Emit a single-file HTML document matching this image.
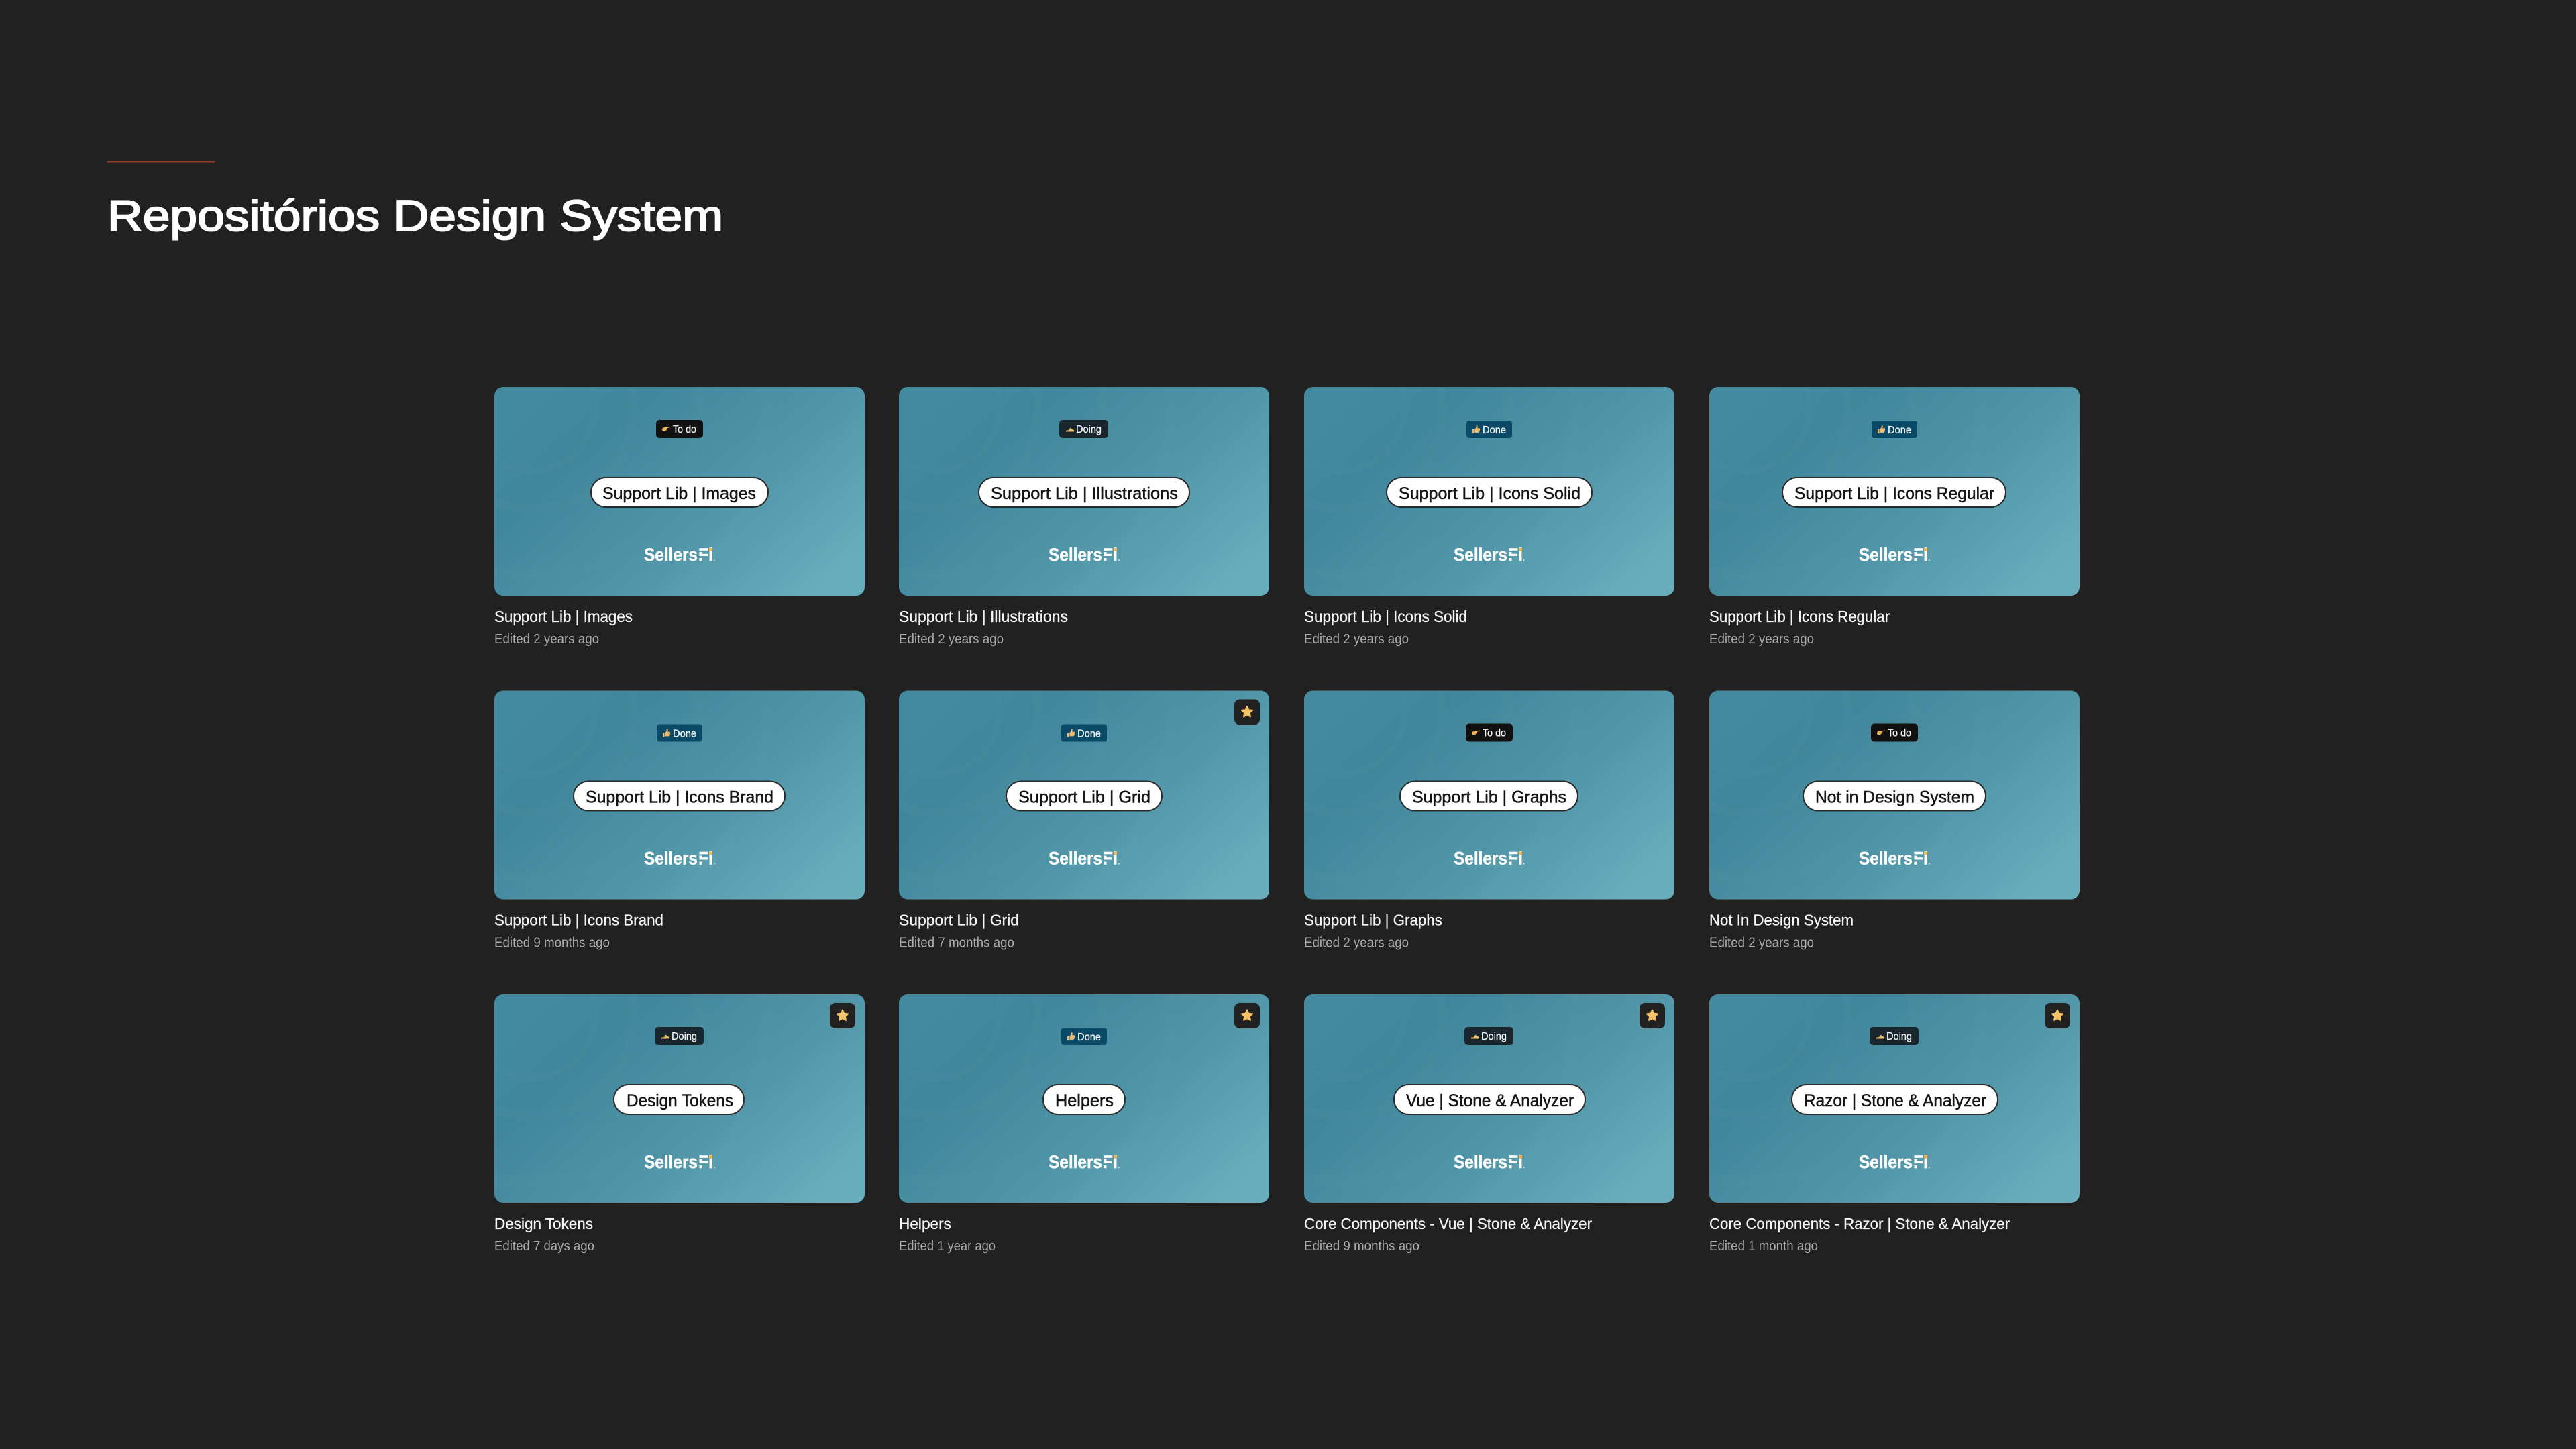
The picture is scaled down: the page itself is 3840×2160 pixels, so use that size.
<!DOCTYPE html>
<html lang="pt">
<head>
<meta charset="utf-8">
<title>Repositórios Design System</title>
<style>
html,body{margin:0;padding:0;background:#212121;width:3840px;height:2160px;overflow:hidden}
svg{display:block}
text{font-family:"Liberation Sans",sans-serif}
.pill{font-size:25px;fill:#151515;stroke:#151515;stroke-width:.55px}
.badge{font-size:15.5px;fill:#f2f5f6;stroke:#f2f5f6;stroke-width:.25px}
.name{font-size:23px;fill:#f6f6f6;stroke:#f6f6f6;stroke-width:.3px}
.sub{font-size:20px;fill:#acacac}
.logo{font-size:27px;font-weight:700;fill:#fff;stroke:#fff;stroke-width:.4px}
</style>
</head>
<body>
<svg xmlns="http://www.w3.org/2000/svg" width="3840" height="2160" viewBox="0 0 3840 2160">
<defs>
<linearGradient id="g" gradientUnits="userSpaceOnUse" x1="120" y1="-30" x2="450" y2="340">
<stop offset="0" stop-color="#438a9e"/>
<stop offset=".2" stop-color="#40869a"/>
<stop offset=".6" stop-color="#5195a8"/>
<stop offset="1" stop-color="#69aebd"/>
</linearGradient>
<clipPath id="cc"><rect width="552" height="311" rx="13"/></clipPath>
<clipPath id="fc"><rect x="300" y="239" width="24" height="5"/><rect x="300" y="246" width="24" height="6"/><rect x="300" y="255" width="24" height="5"/></clipPath>
<g id="bg">
<rect width="552" height="311" rx="13" fill="url(#g)"/>
<g clip-path="url(#cc)" fill="none" stroke="#fff" stroke-opacity=".016">
<circle cx="55" cy="30" r="95" stroke-width="10"/>
<circle cx="55" cy="30" r="152" stroke-width="14"/>
<circle cx="55" cy="30" r="250" stroke-width="16"/>
<circle cx="55" cy="30" r="350" stroke-width="18"/>
</g>
</g>
<g id="mark"><rect x="320" y="240" width="5" height="4.500" fill="#f4b64f"/><rect x="327" y="257.500" width="1.500" height="1.500" fill="#fff"/></g>
<g id="star">
<rect x="500" y="13" width="38" height="38" rx="8" fill="#212121"/>
<path transform="translate(519 32)" d="M0-8.500 2.350-3.240 8.080-2.630 3.800 1.240 5 6.880 0 4-5 6.880-3.800 1.240-8.080-2.630-2.350-3.240Z" fill="#f6c368" stroke="#f6c368" stroke-width="2" stroke-linejoin="round"/>
</g>
<g id="todo"><rect x="241" y="49" width="70" height="27" rx="5" fill="#111"/><path d="M250 63.500c0-2 1.500-3.200 3.400-3.400l1.400-.4c.7-.2 1.300-.2 1.600.1l5.300-.7c.4 0 .5.9 0 1l-4.400 1.200c-.1 1.800-.6 3.300-2.300 4.200-1.500.8-5 .4-5-2Z" fill="#f2b554"/></g>
<g id="done"><rect x="242" y="50" width="68" height="26" rx="4" fill="#0b4a66"/><path d="M251 63h2.500v6H251ZM254.300 63.300l2.200-3.300.4-3c1.400-.3 2.100 1 1.700 2.400l-.5 1.800h3c1 0 1.200 1 .7 1.600.5.600.4 1.400-.1 1.800.3.700.1 1.400-.5 1.700.1.900-.4 1.600-1.300 1.600h-5.600Z" fill="#eebb70"/></g>
<g id="doing"><rect x="239" y="49" width="73" height="27" rx="5" fill="#1a262d"/><path d="M249 66.500v-1.700l4-.7 2-2.800c.4-.6 1-.8 1.300-.3l.9 1.500 3.200 1.300c.6.300.8 1.200.6 2.700Z" fill="#f0c06c"/></g>
</defs>

<rect width="3840" height="2160" fill="#212121"/>
<rect x="160" y="240" width="160" height="2.500" fill="#8f3d2d"/>
<text x="160" y="344" font-size="65" font-weight="400" fill="#fff" stroke="#fff" stroke-width="2" textLength="918" lengthAdjust="spacingAndGlyphs">Repositórios Design System</text>

<!-- Row 1 -->
<g transform="translate(737 577)">
<use href="#bg"/><use href="#todo"/>
<text class="badge" x="266" y="68" textLength="35" lengthAdjust="spacingAndGlyphs">To do</text>
<rect x="144" y="135" width="264" height="44" rx="22" fill="#fff" stroke="#2a2a2a" stroke-width="2"/>
<text class="pill" x="161" y="167" textLength="229" lengthAdjust="spacingAndGlyphs">Support Lib | Images</text>
<text class="logo" x="223" y="259" textLength="80" lengthAdjust="spacingAndGlyphs">Sellers</text><text class="logo" x="304" y="259" textLength="15" lengthAdjust="spacingAndGlyphs" clip-path="url(#fc)">F</text><text class="logo" x="319" y="259" textLength="7" lengthAdjust="spacingAndGlyphs">i</text><use href="#mark"/>
<text class="name" x="0" y="350" textLength="206" lengthAdjust="spacingAndGlyphs">Support Lib | Images</text>
<text class="sub" x="0" y="382" textLength="156" lengthAdjust="spacingAndGlyphs">Edited 2 years ago</text>
</g>
<g transform="translate(1340 577)">
<use href="#bg"/><use href="#doing"/>
<text class="badge" x="264" y="68" textLength="38" lengthAdjust="spacingAndGlyphs">Doing</text>
<rect x="119" y="135" width="314" height="44" rx="22" fill="#fff" stroke="#2a2a2a" stroke-width="2"/>
<text class="pill" x="137" y="167" textLength="279" lengthAdjust="spacingAndGlyphs">Support Lib | Illustrations</text>
<text class="logo" x="223" y="259" textLength="80" lengthAdjust="spacingAndGlyphs">Sellers</text><text class="logo" x="304" y="259" textLength="15" lengthAdjust="spacingAndGlyphs" clip-path="url(#fc)">F</text><text class="logo" x="319" y="259" textLength="7" lengthAdjust="spacingAndGlyphs">i</text><use href="#mark"/>
<text class="name" x="0" y="350" textLength="252" lengthAdjust="spacingAndGlyphs">Support Lib | Illustrations</text>
<text class="sub" x="0" y="382" textLength="156" lengthAdjust="spacingAndGlyphs">Edited 2 years ago</text>
</g>
<g transform="translate(1944 577)">
<use href="#bg"/><use href="#done"/>
<text class="badge" x="266" y="69" textLength="35" lengthAdjust="spacingAndGlyphs">Done</text>
<rect x="123" y="135" width="306" height="44" rx="22" fill="#fff" stroke="#2a2a2a" stroke-width="2"/>
<text class="pill" x="141" y="167" textLength="271" lengthAdjust="spacingAndGlyphs">Support Lib | Icons Solid</text>
<text class="logo" x="223" y="259" textLength="80" lengthAdjust="spacingAndGlyphs">Sellers</text><text class="logo" x="304" y="259" textLength="15" lengthAdjust="spacingAndGlyphs" clip-path="url(#fc)">F</text><text class="logo" x="319" y="259" textLength="7" lengthAdjust="spacingAndGlyphs">i</text><use href="#mark"/>
<text class="name" x="0" y="350" textLength="243" lengthAdjust="spacingAndGlyphs">Support Lib | Icons Solid</text>
<text class="sub" x="0" y="382" textLength="156" lengthAdjust="spacingAndGlyphs">Edited 2 years ago</text>
</g>
<g transform="translate(2548 577)">
<use href="#bg"/><use href="#done"/>
<text class="badge" x="266" y="69" textLength="35" lengthAdjust="spacingAndGlyphs">Done</text>
<rect x="109" y="135" width="333" height="44" rx="22" fill="#fff" stroke="#2a2a2a" stroke-width="2"/>
<text class="pill" x="127" y="167" textLength="298" lengthAdjust="spacingAndGlyphs">Support Lib | Icons Regular</text>
<text class="logo" x="223" y="259" textLength="80" lengthAdjust="spacingAndGlyphs">Sellers</text><text class="logo" x="304" y="259" textLength="15" lengthAdjust="spacingAndGlyphs" clip-path="url(#fc)">F</text><text class="logo" x="319" y="259" textLength="7" lengthAdjust="spacingAndGlyphs">i</text><use href="#mark"/>
<text class="name" x="0" y="350" textLength="269" lengthAdjust="spacingAndGlyphs">Support Lib | Icons Regular</text>
<text class="sub" x="0" y="382" textLength="156" lengthAdjust="spacingAndGlyphs">Edited 2 years ago</text>
</g>

<!-- Row 2 -->
<g transform="translate(737 1029.500)">
<use href="#bg"/><use href="#done"/>
<text class="badge" x="266" y="69" textLength="35" lengthAdjust="spacingAndGlyphs">Done</text>
<rect x="118" y="135" width="315" height="44" rx="22" fill="#fff" stroke="#2a2a2a" stroke-width="2"/>
<text class="pill" x="136" y="167" textLength="280" lengthAdjust="spacingAndGlyphs">Support Lib | Icons Brand</text>
<text class="logo" x="223" y="259" textLength="80" lengthAdjust="spacingAndGlyphs">Sellers</text><text class="logo" x="304" y="259" textLength="15" lengthAdjust="spacingAndGlyphs" clip-path="url(#fc)">F</text><text class="logo" x="319" y="259" textLength="7" lengthAdjust="spacingAndGlyphs">i</text><use href="#mark"/>
<text class="name" x="0" y="350" textLength="252" lengthAdjust="spacingAndGlyphs">Support Lib | Icons Brand</text>
<text class="sub" x="0" y="382" textLength="172" lengthAdjust="spacingAndGlyphs">Edited 9 months ago</text>
</g>
<g transform="translate(1340 1029.500)">
<use href="#bg"/><use href="#done"/><use href="#star"/>
<text class="badge" x="266" y="69" textLength="35" lengthAdjust="spacingAndGlyphs">Done</text>
<rect x="160" y="135" width="232" height="44" rx="22" fill="#fff" stroke="#2a2a2a" stroke-width="2"/>
<text class="pill" x="178" y="167" textLength="197" lengthAdjust="spacingAndGlyphs">Support Lib | Grid</text>
<text class="logo" x="223" y="259" textLength="80" lengthAdjust="spacingAndGlyphs">Sellers</text><text class="logo" x="304" y="259" textLength="15" lengthAdjust="spacingAndGlyphs" clip-path="url(#fc)">F</text><text class="logo" x="319" y="259" textLength="7" lengthAdjust="spacingAndGlyphs">i</text><use href="#mark"/>
<text class="name" x="0" y="350" textLength="179" lengthAdjust="spacingAndGlyphs">Support Lib | Grid</text>
<text class="sub" x="0" y="382" textLength="172" lengthAdjust="spacingAndGlyphs">Edited 7 months ago</text>
</g>
<g transform="translate(1944 1029.500)">
<use href="#bg"/><use href="#todo"/>
<text class="badge" x="266" y="68" textLength="35" lengthAdjust="spacingAndGlyphs">To do</text>
<rect x="143" y="135" width="265" height="44" rx="22" fill="#fff" stroke="#2a2a2a" stroke-width="2"/>
<text class="pill" x="161" y="167" textLength="230" lengthAdjust="spacingAndGlyphs">Support Lib | Graphs</text>
<text class="logo" x="223" y="259" textLength="80" lengthAdjust="spacingAndGlyphs">Sellers</text><text class="logo" x="304" y="259" textLength="15" lengthAdjust="spacingAndGlyphs" clip-path="url(#fc)">F</text><text class="logo" x="319" y="259" textLength="7" lengthAdjust="spacingAndGlyphs">i</text><use href="#mark"/>
<text class="name" x="0" y="350" textLength="206" lengthAdjust="spacingAndGlyphs">Support Lib | Graphs</text>
<text class="sub" x="0" y="382" textLength="156" lengthAdjust="spacingAndGlyphs">Edited 2 years ago</text>
</g>
<g transform="translate(2548 1029.500)">
<use href="#bg"/><use href="#todo"/>
<text class="badge" x="266" y="68" textLength="35" lengthAdjust="spacingAndGlyphs">To do</text>
<rect x="140" y="135" width="272" height="44" rx="22" fill="#fff" stroke="#2a2a2a" stroke-width="2"/>
<text class="pill" x="158" y="167" textLength="237" lengthAdjust="spacingAndGlyphs">Not in Design System</text>
<text class="logo" x="223" y="259" textLength="80" lengthAdjust="spacingAndGlyphs">Sellers</text><text class="logo" x="304" y="259" textLength="15" lengthAdjust="spacingAndGlyphs" clip-path="url(#fc)">F</text><text class="logo" x="319" y="259" textLength="7" lengthAdjust="spacingAndGlyphs">i</text><use href="#mark"/>
<text class="name" x="0" y="350" textLength="215" lengthAdjust="spacingAndGlyphs">Not In Design System</text>
<text class="sub" x="0" y="382" textLength="156" lengthAdjust="spacingAndGlyphs">Edited 2 years ago</text>
</g>

<!-- Row 3 -->
<g transform="translate(737 1482)">
<use href="#bg"/><use href="#doing"/><use href="#star"/>
<text class="badge" x="264" y="68" textLength="38" lengthAdjust="spacingAndGlyphs">Doing</text>
<rect x="178" y="135" width="194" height="44" rx="22" fill="#fff" stroke="#2a2a2a" stroke-width="2"/>
<text class="pill" x="197" y="167" textLength="159" lengthAdjust="spacingAndGlyphs">Design Tokens</text>
<text class="logo" x="223" y="259" textLength="80" lengthAdjust="spacingAndGlyphs">Sellers</text><text class="logo" x="304" y="259" textLength="15" lengthAdjust="spacingAndGlyphs" clip-path="url(#fc)">F</text><text class="logo" x="319" y="259" textLength="7" lengthAdjust="spacingAndGlyphs">i</text><use href="#mark"/>
<text class="name" x="0" y="350" textLength="147" lengthAdjust="spacingAndGlyphs">Design Tokens</text>
<text class="sub" x="0" y="382" textLength="149" lengthAdjust="spacingAndGlyphs">Edited 7 days ago</text>
</g>
<g transform="translate(1340 1482)">
<use href="#bg"/><use href="#done"/><use href="#star"/>
<text class="badge" x="266" y="69" textLength="35" lengthAdjust="spacingAndGlyphs">Done</text>
<rect x="215" y="135" width="122" height="44" rx="22" fill="#fff" stroke="#2a2a2a" stroke-width="2"/>
<text class="pill" x="233" y="167" textLength="87" lengthAdjust="spacingAndGlyphs">Helpers</text>
<text class="logo" x="223" y="259" textLength="80" lengthAdjust="spacingAndGlyphs">Sellers</text><text class="logo" x="304" y="259" textLength="15" lengthAdjust="spacingAndGlyphs" clip-path="url(#fc)">F</text><text class="logo" x="319" y="259" textLength="7" lengthAdjust="spacingAndGlyphs">i</text><use href="#mark"/>
<text class="name" x="0" y="350" textLength="78" lengthAdjust="spacingAndGlyphs">Helpers</text>
<text class="sub" x="0" y="382" textLength="144" lengthAdjust="spacingAndGlyphs">Edited 1 year ago</text>
</g>
<g transform="translate(1944 1482)">
<use href="#bg"/><use href="#doing"/><use href="#star"/>
<text class="badge" x="264" y="68" textLength="38" lengthAdjust="spacingAndGlyphs">Doing</text>
<rect x="134" y="135" width="285" height="44" rx="22" fill="#fff" stroke="#2a2a2a" stroke-width="2"/>
<text class="pill" x="152" y="167" textLength="250" lengthAdjust="spacingAndGlyphs">Vue | Stone &amp; Analyzer</text>
<text class="logo" x="223" y="259" textLength="80" lengthAdjust="spacingAndGlyphs">Sellers</text><text class="logo" x="304" y="259" textLength="15" lengthAdjust="spacingAndGlyphs" clip-path="url(#fc)">F</text><text class="logo" x="319" y="259" textLength="7" lengthAdjust="spacingAndGlyphs">i</text><use href="#mark"/>
<text class="name" x="0" y="350" textLength="429" lengthAdjust="spacingAndGlyphs">Core Components - Vue | Stone &amp; Analyzer</text>
<text class="sub" x="0" y="382" textLength="172" lengthAdjust="spacingAndGlyphs">Edited 9 months ago</text>
</g>
<g transform="translate(2548 1482)">
<use href="#bg"/><use href="#doing"/><use href="#star"/>
<text class="badge" x="264" y="68" textLength="38" lengthAdjust="spacingAndGlyphs">Doing</text>
<rect x="123" y="135" width="307" height="44" rx="22" fill="#fff" stroke="#2a2a2a" stroke-width="2"/>
<text class="pill" x="141" y="167" textLength="272" lengthAdjust="spacingAndGlyphs">Razor | Stone &amp; Analyzer</text>
<text class="logo" x="223" y="259" textLength="80" lengthAdjust="spacingAndGlyphs">Sellers</text><text class="logo" x="304" y="259" textLength="15" lengthAdjust="spacingAndGlyphs" clip-path="url(#fc)">F</text><text class="logo" x="319" y="259" textLength="7" lengthAdjust="spacingAndGlyphs">i</text><use href="#mark"/>
<text class="name" x="0" y="350" textLength="448" lengthAdjust="spacingAndGlyphs">Core Components - Razor | Stone &amp; Analyzer</text>
<text class="sub" x="0" y="382" textLength="162" lengthAdjust="spacingAndGlyphs">Edited 1 month ago</text>
</g>
</svg>
</body>
</html>
